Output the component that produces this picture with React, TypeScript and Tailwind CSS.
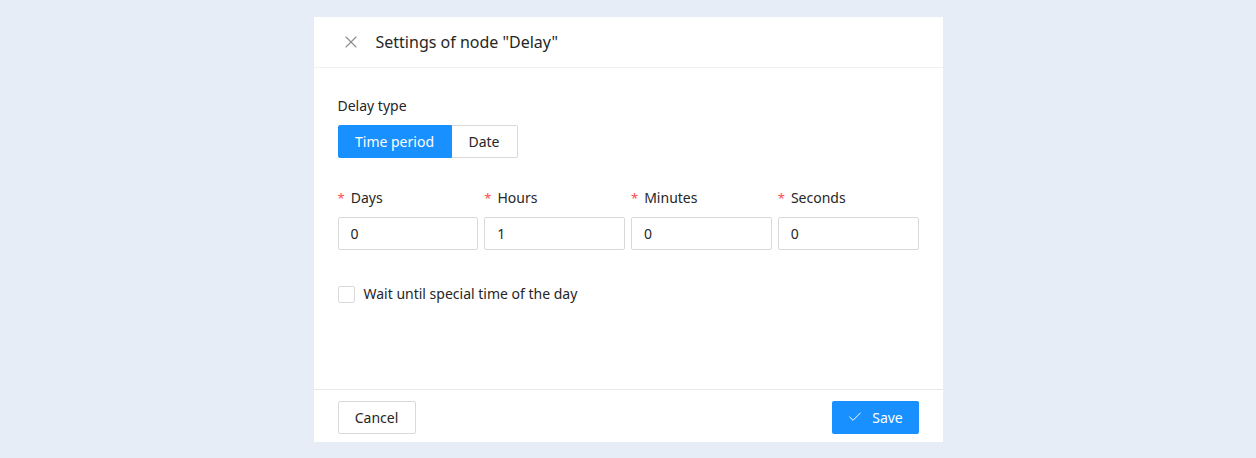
import { Check, X } from 'lucide-react';

const fields = [
  { label: 'Days', value: '0' },
  { label: 'Hours', value: '1' },
  { label: 'Minutes', value: '0' },
  { label: 'Seconds', value: '0' },
];

export default function App() {
  return (
    <div
      className="w-full h-[458px] bg-[#e6edf6] flex justify-center pt-[17px] text-[14px] text-[#262626]"
      style={{ fontFamily: '"Noto Sans", "Open Sans", sans-serif' }}
    >
      <div className="w-[629px] h-[425px] bg-white flex flex-col">
        {/* header */}
        <div className="h-[51px] flex items-center border-b border-[#f0f0f0] pl-[27px] shrink-0">
          <X className="w-[20px] h-[20px] text-[#8c8c8c]" strokeWidth={1.3} />
          <span className="ml-[15px] text-[16px]">Settings of node "Delay"</span>
        </div>

        {/* body */}
        <div className="flex-1 px-[24px] pt-[27px]">
          <div className="leading-[22px]">Delay type</div>
          <div className="flex mt-[8px]">
            <button
              type="button"
              className="h-[33px] w-[114px] bg-[#1890ff] text-white rounded-l-[2px] border border-[#1890ff]"
            >
              Time period
            </button>
            <button
              type="button"
              className="h-[33px] w-[66px] bg-white border border-l-0 border-[#d9d9d9] rounded-r-[2px]"
            >
              Date
            </button>
          </div>

          <div className="grid grid-cols-4 gap-x-[6px] mt-[29px]">
            {fields.map((f) => (
              <div key={f.label}>
                <div className="leading-[22px] flex items-center">
                  <span className="text-[#ff4d4f] mr-[6px] text-[13px]">*</span>
                  {f.label}
                </div>
                <div className="mt-[8px] h-[33px] border border-[#d9d9d9] rounded-[2px] flex items-center px-[12px]">
                  {f.value}
                </div>
              </div>
            ))}
          </div>

          <label className="flex items-center mt-[33px] leading-[22px]">
            <span className="w-[17px] h-[17px] border border-[#d9d9d9] rounded-[2px] bg-white" />
            <span className="ml-[9px]">Wait until special time of the day</span>
          </label>
        </div>

        {/* footer */}
        <div className="h-[53px] border-t border-[#e8e8e8] flex items-center justify-between px-[24px] pt-[2px] shrink-0">
          <button
            type="button"
            className="h-[33px] w-[78px] border border-[#d9d9d9] rounded-[2px] bg-white"
          >
            Cancel
          </button>
          <button
            type="button"
            className="h-[33px] w-[87px] bg-[#1890ff] text-white rounded-[2px] flex items-center justify-center gap-[9px]"
          >
            <Check className="w-[16px] h-[16px]" strokeWidth={1.5} />
            Save
          </button>
        </div>
      </div>
    </div>
  );
}
